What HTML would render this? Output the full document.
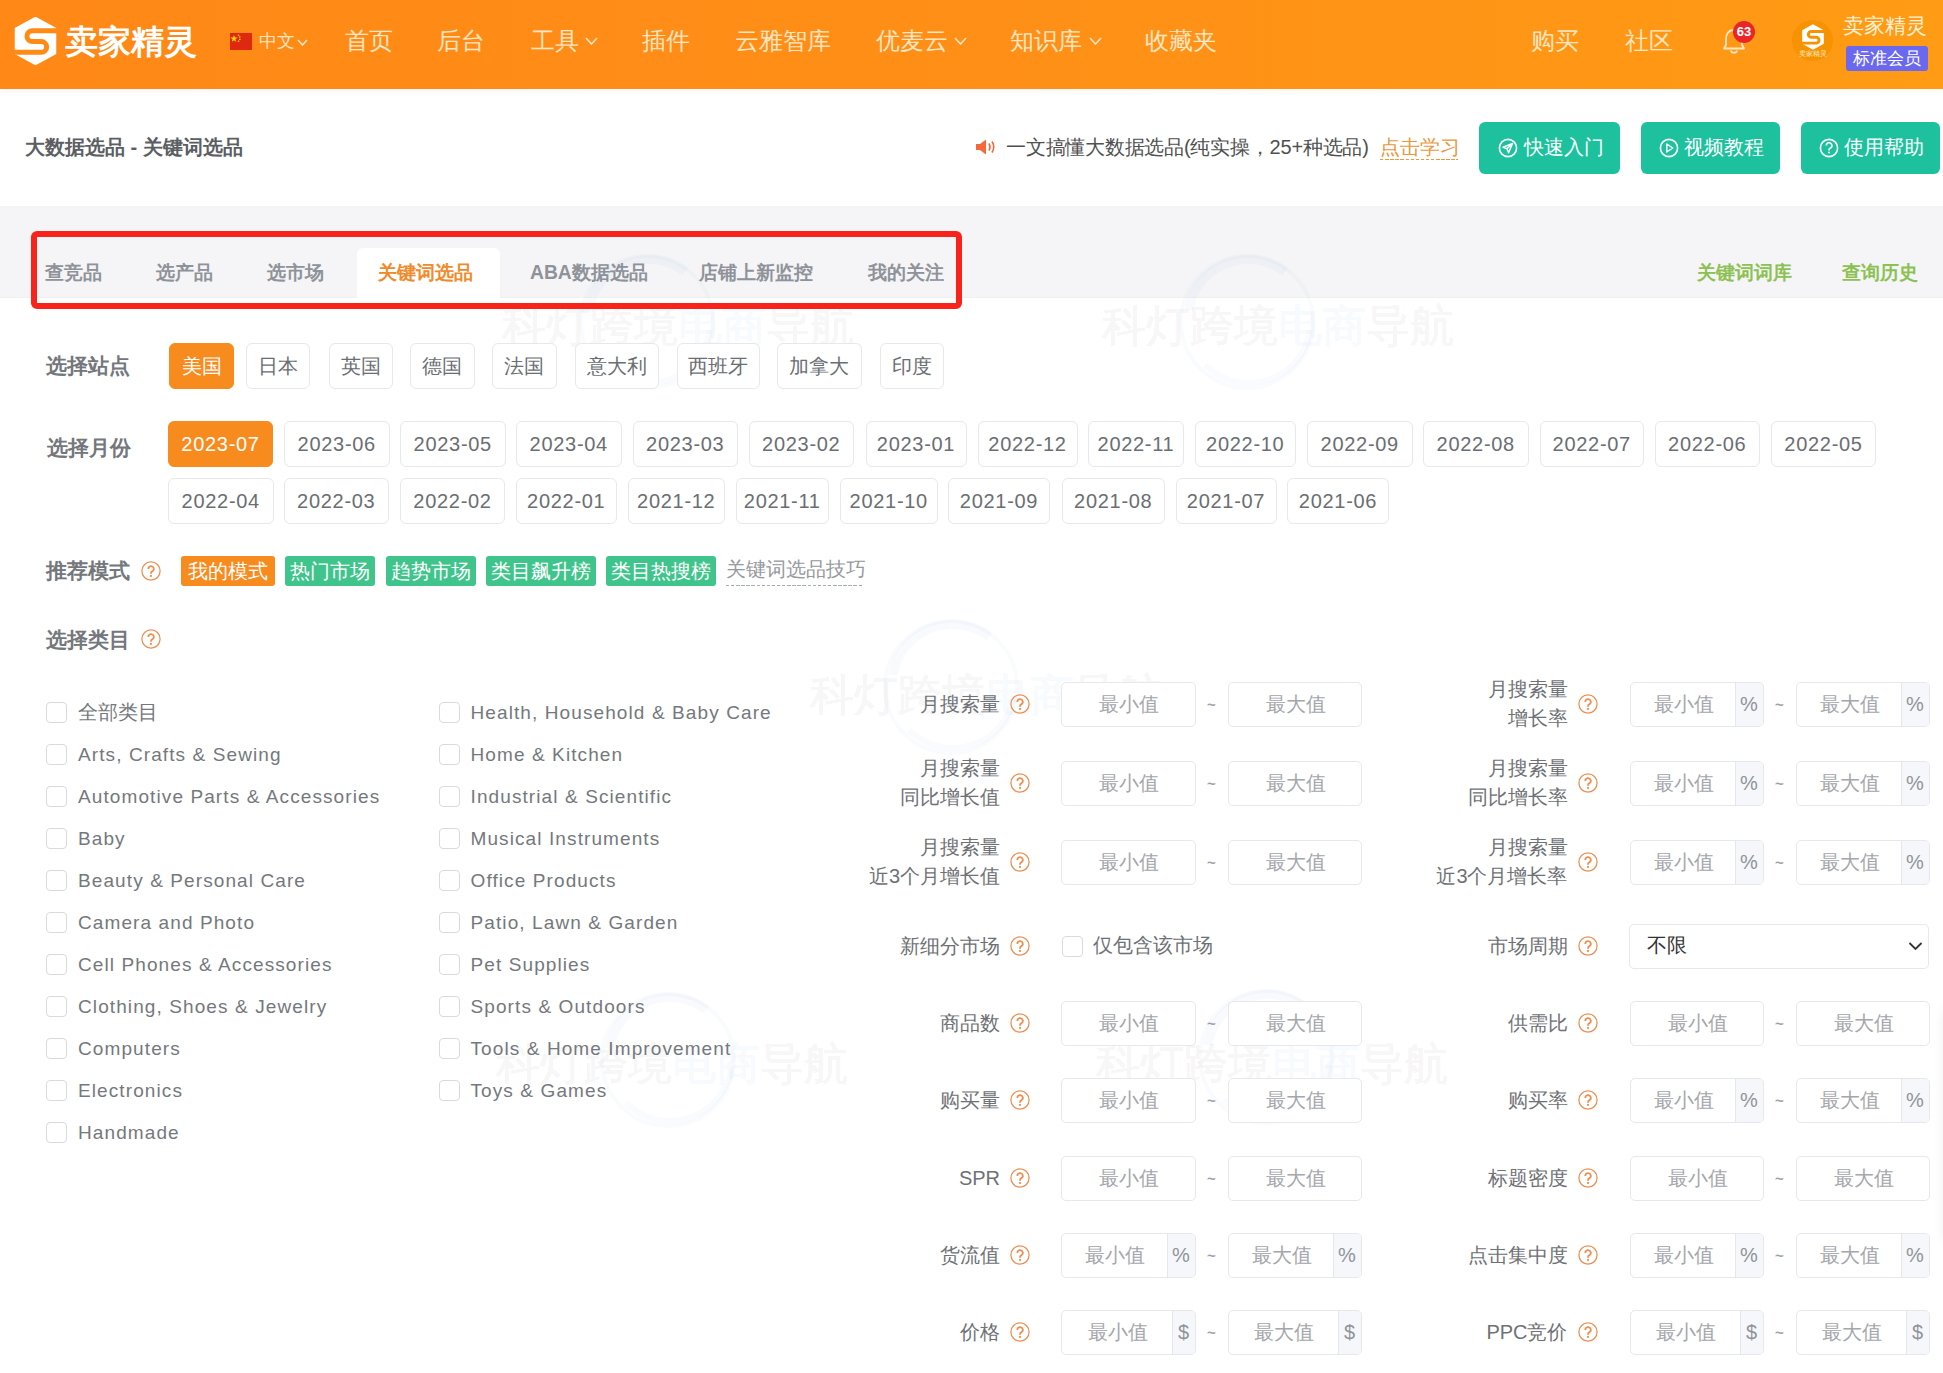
<!DOCTYPE html><html><head><meta charset="utf-8"><title>卖家精灵</title><style>
*{margin:0;padding:0;box-sizing:border-box}
html,body{width:1943px;height:1373px;overflow:hidden;background:#fff;position:relative;font-family:'Liberation Sans',sans-serif}
.t{position:absolute;white-space:nowrap}
.b{position:absolute}
.cb{position:absolute;width:21px;height:21px;border:1px solid #D9DADD;border-radius:4px;background:#fff}
.btn{position:absolute;border:1px solid #E6E8EC;border-radius:6px;background:#fff;color:#6B6E73;font:20px/1 'Liberation Sans',sans-serif;display:flex;align-items:center;justify-content:center}
.inp{position:absolute;border:1px solid #E6E8EC;border-radius:5px;background:#fff;overflow:hidden}
.ph{position:absolute;top:0;bottom:0;display:flex;align-items:center;justify-content:center;color:#A4A6AB;font:20px/1 'Liberation Sans',sans-serif}
.sfx{position:absolute;top:0;bottom:0;right:0;background:#F5F7FA;border-left:1px solid #E4E7ED;display:flex;align-items:center;justify-content:center;color:#909399;font:20px/1 'Liberation Sans',sans-serif}
.q{position:absolute;width:20px;height:20px}
.wm{position:absolute;white-space:nowrap;font:bold 44px/44px 'Liberation Sans',sans-serif;color:rgba(0,0,0,0.04);pointer-events:none}
</style></head><body>
<div class="b" style="left:0px;top:0px;width:1943px;height:89px;background:linear-gradient(90deg,#FF8816 0%,#FF8F17 50%,#FF9B14 100%);box-shadow:0 2px 6px rgba(0,0,0,0.045)"></div>
<svg class="b" style="left:14px;top:17px" width="43" height="48" viewBox="0 0 43 48">
<polygon points="21.5,0.5 41.5,11.5 41.5,36.5 21.5,47.5 1.5,36.5 1.5,11.5" fill="#fff" stroke="#fff" stroke-width="1.5" stroke-linejoin="round"/>
<path d="M45 13.8 H18.4 A5.4 5.4 0 0 0 18.4 24.6 H27.3 A5.35 5.35 0 0 1 27.3 35.3 H-2" fill="none" stroke="#FF8A16" stroke-width="5"/>
</svg>
<div class="t" style="left:65px;top:25px;font:bold 33px/33px 'Liberation Sans',sans-serif;color:#fff;font-weight:900">卖家精灵</div>
<svg class="b" style="left:230px;top:33px" width="22" height="17" viewBox="0 0 22 17">
<rect width="22" height="17" fill="#DE2910"/><polygon points="4,2 4.9,4.6 7.6,4.6 5.4,6.2 6.2,8.8 4,7.2 1.8,8.8 2.6,6.2 0.4,4.6 3.1,4.6" fill="#FFDE00"/>
<circle cx="8.5" cy="2.2" r="0.8" fill="#FFDE00"/><circle cx="9.8" cy="4" r="0.8" fill="#FFDE00"/><circle cx="9.8" cy="6.4" r="0.8" fill="#FFDE00"/><circle cx="8.5" cy="8.2" r="0.8" fill="#FFDE00"/>
</svg>
<div class="t" style="left:259px;top:32px;font:normal 18px/18px 'Liberation Sans',sans-serif;color:#FFE6C2;">中文</div>
<svg class="b" style="left:297px;top:39px" width="11" height="7" viewBox="0 0 11 7"><polyline points="1,1 5.5,6 10,1" fill="none" stroke="#FFE6C2" stroke-width="1.6"/></svg>
<div class="t" style="left:345px;top:29px;font:normal 24px/24px 'Liberation Sans',sans-serif;color:#FFE6C2;">首页</div>
<div class="t" style="left:437px;top:29px;font:normal 24px/24px 'Liberation Sans',sans-serif;color:#FFE6C2;">后台</div>
<div class="t" style="left:531px;top:29px;font:normal 24px/24px 'Liberation Sans',sans-serif;color:#FFE6C2;">工具</div>
<div class="t" style="left:642px;top:29px;font:normal 24px/24px 'Liberation Sans',sans-serif;color:#FFE6C2;">插件</div>
<div class="t" style="left:735px;top:29px;font:normal 24px/24px 'Liberation Sans',sans-serif;color:#FFE6C2;">云雅智库</div>
<div class="t" style="left:876px;top:29px;font:normal 24px/24px 'Liberation Sans',sans-serif;color:#FFE6C2;">优麦云</div>
<div class="t" style="left:1010px;top:29px;font:normal 24px/24px 'Liberation Sans',sans-serif;color:#FFE6C2;">知识库</div>
<div class="t" style="left:1145px;top:29px;font:normal 24px/24px 'Liberation Sans',sans-serif;color:#FFE6C2;">收藏夹</div>
<div class="t" style="left:1531px;top:29px;font:normal 24px/24px 'Liberation Sans',sans-serif;color:#FFE6C2;">购买</div>
<div class="t" style="left:1625px;top:29px;font:normal 24px/24px 'Liberation Sans',sans-serif;color:#FFE6C2;">社区</div>
<svg class="b" style="left:585px;top:37px" width="13" height="8" viewBox="0 0 13 8"><polyline points="1,1 6.5,7 12,1" fill="none" stroke="#FFE6C2" stroke-width="1.6"/></svg>
<svg class="b" style="left:954px;top:37px" width="13" height="8" viewBox="0 0 13 8"><polyline points="1,1 6.5,7 12,1" fill="none" stroke="#FFE6C2" stroke-width="1.6"/></svg>
<svg class="b" style="left:1089px;top:37px" width="13" height="8" viewBox="0 0 13 8"><polyline points="1,1 6.5,7 12,1" fill="none" stroke="#FFE6C2" stroke-width="1.6"/></svg>
<svg class="b" style="left:1722px;top:27px" width="24" height="27" viewBox="0 0 24 27">
<path d="M12 3 C6.5 3 4 7 4 12 V18 L2 21.5 H22 L20 18 V12 C20 7 17.5 3 12 3 Z" fill="none" stroke="#FFE6C2" stroke-width="1.8" stroke-linejoin="round"/>
<path d="M9 23.5 a3 2.2 0 0 0 6 0" fill="none" stroke="#FFE6C2" stroke-width="1.8"/>
</svg>
<div class="b" style="left:1733px;top:21px;width:22px;height:22px;border-radius:50%;background:#E8262A;color:#fff;font:bold 13px/22px 'Liberation Sans',sans-serif;text-align:center">63</div>
<div class="b" style="left:1792px;top:20px;width:41px;height:41px;border-radius:50%;background:#F79300"></div>
<svg class="b" style="left:1801px;top:24px" width="24" height="26" viewBox="0 0 43 48">
<polygon points="21.5,0.5 41.5,11.5 41.5,36.5 21.5,47.5 1.5,36.5 1.5,11.5" fill="#fff"/>
<path d="M45 13.8 H18.4 A5.4 5.4 0 0 0 18.4 24.6 H27.3 A5.35 5.35 0 0 1 27.3 35.3 H-2" fill="none" stroke="#F79300" stroke-width="5.5"/>
</svg>
<div class="t" style="left:1799px;top:50px;font:normal 7px/8px 'Liberation Sans',sans-serif;color:#FFE9C8;">卖家精灵</div>
<div class="t" style="left:1843px;top:15px;font:normal 21px/21px 'Liberation Sans',sans-serif;color:#FFF1D6;">卖家精灵</div>
<div class="b" style="left:1846px;top:46px;width:82px;height:25px;border-radius:3px;background:#6B68F0;color:#fff;font:17px/25px 'Liberation Sans',sans-serif;text-align:center">标准会员</div>
<div class="t" style="left:25px;top:137px;font:bold 20px/20px 'Liberation Sans',sans-serif;color:#5B5E63;">大数据选品 - 关键词选品</div>
<svg class="b" style="left:975px;top:138px" width="22" height="18" viewBox="0 0 22 18">
<path d="M1 6 H5 L11 1.5 V16.5 L5 12 H1 Z" fill="#F4683A"/>
<path d="M14 5.5 Q16 9 14 12.5" fill="none" stroke="#F4683A" stroke-width="1.6"/>
<path d="M17 3.5 Q20.5 9 17 14.5" fill="none" stroke="#F4683A" stroke-width="1.6"/>
</svg>
<div class="t" style="left:1006px;top:137px;font:normal 20px/20px 'Liberation Sans',sans-serif;color:#505050;letter-spacing:-0.22px">一文搞懂大数据选品(纯实操，25+种选品)</div>
<div class="t" style="left:1380px;top:137.5px;font:normal 19.5px/19.5px 'Liberation Sans',sans-serif;color:#E9983C;">点击学习</div>
<div class="b" style="left:1380px;top:158.5px;width:78px;height:1.5px;background:repeating-linear-gradient(90deg,#E9983C 0 3.4px,transparent 3.4px 5.1px)"></div>
<div class="b" style="left:1479px;top:122px;width:141px;height:52px;border-radius:6px;background:#1DC19E"></div>
<svg class="b" style="left:1498px;top:138px" width="20" height="20" viewBox="0 0 20 20"><circle cx="10" cy="10" r="8.6" fill="none" stroke="#fff" stroke-width="1.6"/><path d="M14.5 5.5 L5 9.3 L9 10.8 L10.6 14.8 Z M9 10.8 L14.5 5.5" fill="none" stroke="#fff" stroke-width="1.5" stroke-linejoin="round"/></svg>
<div class="t" style="left:1524px;top:138px;font:normal 19.5px/19.5px 'Liberation Sans',sans-serif;color:#fff;">快速入门</div>
<div class="b" style="left:1641px;top:122px;width:139px;height:52px;border-radius:6px;background:#1DC19E"></div>
<svg class="b" style="left:1658.5px;top:138px" width="20" height="20" viewBox="0 0 20 20"><circle cx="10" cy="10" r="8.6" fill="none" stroke="#fff" stroke-width="1.6"/><path d="M7.8 6 L13.8 10 L7.8 14 Z" fill="none" stroke="#fff" stroke-width="1.5" stroke-linejoin="round"/></svg>
<div class="t" style="left:1684px;top:138px;font:normal 19.5px/19.5px 'Liberation Sans',sans-serif;color:#fff;">视频教程</div>
<div class="b" style="left:1801px;top:122px;width:139px;height:52px;border-radius:6px;background:#1DC19E"></div>
<svg class="b" style="left:1818.5px;top:138px" width="20" height="20" viewBox="0 0 20 20"><circle cx="10" cy="10" r="8.6" fill="none" stroke="#fff" stroke-width="1.6"/><path d="M7.3 7.6 a2.8 2.8 0 1 1 3.8 2.6 c-0.8 0.4 -1.1 0.9 -1.1 1.8 v0.6" fill="none" stroke="#fff" stroke-width="1.6"/><circle cx="10" cy="14.6" r="1" fill="#fff"/></svg>
<div class="t" style="left:1844px;top:138px;font:normal 19.5px/19.5px 'Liberation Sans',sans-serif;color:#fff;">使用帮助</div>
<div class="b" style="left:0px;top:206px;width:1943px;height:92px;background:#F5F5F7;border-bottom:1px solid #EEEFF1"></div>
<div class="b" style="left:357px;top:248px;width:143px;height:51px;background:#fff;border-radius:6px 6px 0 0"></div>
<div class="t" style="left:45px;top:263px;font:bold 19.3px/19.3px 'Liberation Sans',sans-serif;color:#8F9399;font-weight:900">查竞品</div>
<div class="t" style="left:156px;top:263px;font:bold 19.3px/19.3px 'Liberation Sans',sans-serif;color:#8F9399;font-weight:900">选产品</div>
<div class="t" style="left:267px;top:263px;font:bold 19.3px/19.3px 'Liberation Sans',sans-serif;color:#8F9399;font-weight:900">选市场</div>
<div class="t" style="left:530px;top:263px;font:bold 19.3px/19.3px 'Liberation Sans',sans-serif;color:#8F9399;font-weight:900">ABA数据选品</div>
<div class="t" style="left:699px;top:263px;font:bold 19.3px/19.3px 'Liberation Sans',sans-serif;color:#8F9399;font-weight:900">店铺上新监控</div>
<div class="t" style="left:868px;top:263px;font:bold 19.3px/19.3px 'Liberation Sans',sans-serif;color:#8F9399;font-weight:900">我的关注</div>
<div class="t" style="left:378px;top:263px;font:bold 19.3px/19.3px 'Liberation Sans',sans-serif;color:#F08A2B;font-weight:900">关键词选品</div>
<div class="t" style="left:1697px;top:263px;font:bold 19.3px/19.3px 'Liberation Sans',sans-serif;color:#8DC153;">关键词词库</div>
<div class="t" style="left:1842px;top:263px;font:bold 19.3px/19.3px 'Liberation Sans',sans-serif;color:#8DC153;">查询历史</div>
<svg class="b" style="left:575px;top:250px" width="144" height="144" viewBox="0 0 144 144"><circle cx="72" cy="72" r="66" fill="none" stroke="rgba(90,150,215,0.04)" stroke-width="4"/><path d="M14 60 A60 60 0 0 1 110 22" fill="none" stroke="rgba(90,150,215,0.045)" stroke-width="9"/><path d="M30 115 A62 62 0 0 0 135 80" fill="none" stroke="rgba(90,150,215,0.035)" stroke-width="6"/></svg>
<div class="wm" style="left:502px;top:304px">科灯跨境<span style="color:rgba(60,140,220,0.05)">电商</span>导航</div>
<svg class="b" style="left:1175px;top:250px" width="144" height="144" viewBox="0 0 144 144"><circle cx="72" cy="72" r="66" fill="none" stroke="rgba(90,150,215,0.04)" stroke-width="4"/><path d="M14 60 A60 60 0 0 1 110 22" fill="none" stroke="rgba(90,150,215,0.045)" stroke-width="9"/><path d="M30 115 A62 62 0 0 0 135 80" fill="none" stroke="rgba(90,150,215,0.035)" stroke-width="6"/></svg>
<div class="wm" style="left:1102px;top:304px">科灯跨境<span style="color:rgba(60,140,220,0.05)">电商</span>导航</div>
<svg class="b" style="left:879px;top:615px" width="144" height="144" viewBox="0 0 144 144"><circle cx="72" cy="72" r="66" fill="none" stroke="rgba(90,150,215,0.04)" stroke-width="4"/><path d="M14 60 A60 60 0 0 1 110 22" fill="none" stroke="rgba(90,150,215,0.045)" stroke-width="9"/><path d="M30 115 A62 62 0 0 0 135 80" fill="none" stroke="rgba(90,150,215,0.035)" stroke-width="6"/></svg>
<div class="wm" style="left:810px;top:673px">科灯跨境<span style="color:rgba(60,140,220,0.05)">电商</span>导航</div>
<svg class="b" style="left:596px;top:988px" width="144" height="144" viewBox="0 0 144 144"><circle cx="72" cy="72" r="66" fill="none" stroke="rgba(90,150,215,0.04)" stroke-width="4"/><path d="M14 60 A60 60 0 0 1 110 22" fill="none" stroke="rgba(90,150,215,0.045)" stroke-width="9"/><path d="M30 115 A62 62 0 0 0 135 80" fill="none" stroke="rgba(90,150,215,0.035)" stroke-width="6"/></svg>
<div class="wm" style="left:496px;top:1042px">科灯跨境<span style="color:rgba(60,140,220,0.05)">电商</span>导航</div>
<svg class="b" style="left:1194px;top:985px" width="144" height="144" viewBox="0 0 144 144"><circle cx="72" cy="72" r="66" fill="none" stroke="rgba(90,150,215,0.04)" stroke-width="4"/><path d="M14 60 A60 60 0 0 1 110 22" fill="none" stroke="rgba(90,150,215,0.045)" stroke-width="9"/><path d="M30 115 A62 62 0 0 0 135 80" fill="none" stroke="rgba(90,150,215,0.035)" stroke-width="6"/></svg>
<div class="wm" style="left:1096px;top:1042px">科灯跨境<span style="color:rgba(60,140,220,0.05)">电商</span>导航</div>
<div class="b" style="left:31px;top:231px;width:931px;height:78px;border:6px solid #F8231A;border-radius:6px"></div>
<div class="t" style="left:46px;top:355px;font:bold 21px/21px 'Liberation Sans',sans-serif;color:#74777C;font-weight:900">选择站点</div>
<div class="btn" style="left:169px;top:343px;width:65px;height:46px;background:#F78B1E;border-color:#F78B1E;color:#fff;font-size:20px;">美国</div>
<div class="btn" style="left:246px;top:343px;width:64px;height:46px;font-size:20px;">日本</div>
<div class="btn" style="left:328.5px;top:343px;width:64.0px;height:46px;font-size:20px;">英国</div>
<div class="btn" style="left:410px;top:343px;width:64.5px;height:46px;font-size:20px;">德国</div>
<div class="btn" style="left:492px;top:343px;width:64.5px;height:46px;font-size:20px;">法国</div>
<div class="btn" style="left:574.5px;top:343px;width:84.0px;height:46px;font-size:20px;">意大利</div>
<div class="btn" style="left:676.5px;top:343px;width:83.0px;height:46px;font-size:20px;">西班牙</div>
<div class="btn" style="left:777px;top:343px;width:84.5px;height:46px;font-size:20px;">加拿大</div>
<div class="btn" style="left:879.5px;top:343px;width:64.0px;height:46px;font-size:20px;">印度</div>
<div class="t" style="left:47px;top:437px;font:bold 21px/21px 'Liberation Sans',sans-serif;color:#74777C;font-weight:900">选择月份</div>
<div class="btn" style="left:168px;top:421px;width:105px;height:46px;background:#F78B1E;border-color:#F78B1E;color:#fff;font-size:20px;letter-spacing:0.7px;">2023-07</div>
<div class="btn" style="left:284px;top:421px;width:105.5px;height:46px;font-size:20px;letter-spacing:0.7px;">2023-06</div>
<div class="btn" style="left:400px;top:421px;width:105.5px;height:46px;font-size:20px;letter-spacing:0.7px;">2023-05</div>
<div class="btn" style="left:516px;top:421px;width:105.5px;height:46px;font-size:20px;letter-spacing:0.7px;">2023-04</div>
<div class="btn" style="left:633px;top:421px;width:104.5px;height:46px;font-size:20px;letter-spacing:0.7px;">2023-03</div>
<div class="btn" style="left:749px;top:421px;width:104.5px;height:46px;font-size:20px;letter-spacing:0.7px;">2023-02</div>
<div class="btn" style="left:865.5px;top:421px;width:101.0px;height:46px;font-size:20px;letter-spacing:0.7px;">2023-01</div>
<div class="btn" style="left:977.5px;top:421px;width:100.0px;height:46px;font-size:20px;letter-spacing:0.7px;">2022-12</div>
<div class="btn" style="left:1088px;top:421px;width:96px;height:46px;font-size:20px;letter-spacing:0.7px;">2022-11</div>
<div class="btn" style="left:1195px;top:421px;width:100.5px;height:46px;font-size:20px;letter-spacing:0.7px;">2022-10</div>
<div class="btn" style="left:1307px;top:421px;width:105.5px;height:46px;font-size:20px;letter-spacing:0.7px;">2022-09</div>
<div class="btn" style="left:1423px;top:421px;width:105.5px;height:46px;font-size:20px;letter-spacing:0.7px;">2022-08</div>
<div class="btn" style="left:1540px;top:421px;width:103.5px;height:46px;font-size:20px;letter-spacing:0.7px;">2022-07</div>
<div class="btn" style="left:1655px;top:421px;width:104.5px;height:46px;font-size:20px;letter-spacing:0.7px;">2022-06</div>
<div class="btn" style="left:1771px;top:421px;width:105px;height:46px;font-size:20px;letter-spacing:0.7px;">2022-05</div>
<div class="btn" style="left:168px;top:477.5px;width:105.5px;height:46.0px;font-size:20px;letter-spacing:0.7px;">2022-04</div>
<div class="btn" style="left:284px;top:477.5px;width:104.5px;height:46.0px;font-size:20px;letter-spacing:0.7px;">2022-03</div>
<div class="btn" style="left:400px;top:477.5px;width:105px;height:46.0px;font-size:20px;letter-spacing:0.7px;">2022-02</div>
<div class="btn" style="left:515.5px;top:477.5px;width:101.5px;height:46.0px;font-size:20px;letter-spacing:0.7px;">2022-01</div>
<div class="btn" style="left:628px;top:477.5px;width:96.5px;height:46.0px;font-size:20px;letter-spacing:0.7px;">2021-12</div>
<div class="btn" style="left:736px;top:477.5px;width:92.5px;height:46.0px;font-size:20px;letter-spacing:0.7px;">2021-11</div>
<div class="btn" style="left:840px;top:477.5px;width:97.5px;height:46.0px;font-size:20px;letter-spacing:0.7px;">2021-10</div>
<div class="btn" style="left:948px;top:477.5px;width:102px;height:46.0px;font-size:20px;letter-spacing:0.7px;">2021-09</div>
<div class="btn" style="left:1062px;top:477.5px;width:102.5px;height:46.0px;font-size:20px;letter-spacing:0.7px;">2021-08</div>
<div class="btn" style="left:1175.5px;top:477.5px;width:101.0px;height:46.0px;font-size:20px;letter-spacing:0.7px;">2021-07</div>
<div class="btn" style="left:1287px;top:477.5px;width:102px;height:46.0px;font-size:20px;letter-spacing:0.7px;">2021-06</div>
<div class="t" style="left:46px;top:560px;font:bold 21px/21px 'Liberation Sans',sans-serif;color:#74777C;font-weight:900">推荐模式</div>
<svg class="q" style="left:140.5px;top:560.5px;width:20px;height:20px" viewBox="0 0 20 20"><circle cx="10" cy="10" r="9.1" fill="none" stroke="#EC8F52" stroke-width="1.25"/><path d="M7.3 7.9 a2.75 2.75 0 1 1 3.9 2.5 c-0.8 0.4 -1.15 0.9 -1.15 1.8 v0.5" fill="none" stroke="#EC8F52" stroke-width="1.8"/><circle cx="10" cy="14.9" r="1.1" fill="#EC8F52"/></svg>
<div class="b" style="left:181px;top:556px;width:94px;height:30px;border-radius:3px;background:#F78B1E;color:#fff;font:19.5px/30px 'Liberation Sans',sans-serif;text-align:center">我的模式</div>
<div class="b" style="left:284.5px;top:556px;width:90.5px;height:30px;border-radius:3px;background:#3FC48B;color:#fff;font:19.5px/30px 'Liberation Sans',sans-serif;text-align:center">热门市场</div>
<div class="b" style="left:386px;top:556px;width:90px;height:30px;border-radius:3px;background:#3FC48B;color:#fff;font:19.5px/30px 'Liberation Sans',sans-serif;text-align:center">趋势市场</div>
<div class="b" style="left:486px;top:556px;width:110px;height:30px;border-radius:3px;background:#3FC48B;color:#fff;font:19.5px/30px 'Liberation Sans',sans-serif;text-align:center">类目飙升榜</div>
<div class="b" style="left:606px;top:556px;width:110px;height:30px;border-radius:3px;background:#3FC48B;color:#fff;font:19.5px/30px 'Liberation Sans',sans-serif;text-align:center">类目热搜榜</div>
<div class="t" style="left:726px;top:559.5px;font:normal 19.8px/19.8px 'Liberation Sans',sans-serif;color:#96999E;">关键词选品技巧</div>
<div class="b" style="left:725.5px;top:585px;width:137.5px;height:1.2999999999999545px;background:repeating-linear-gradient(90deg,#A9ACB0 0 3.4px,transparent 3.4px 5.1px)"></div>
<div class="t" style="left:46px;top:629px;font:bold 21px/21px 'Liberation Sans',sans-serif;color:#74777C;font-weight:900">选择类目</div>
<svg class="q" style="left:140.5px;top:629px;width:20px;height:20px" viewBox="0 0 20 20"><circle cx="10" cy="10" r="9.1" fill="none" stroke="#EC8F52" stroke-width="1.25"/><path d="M7.3 7.9 a2.75 2.75 0 1 1 3.9 2.5 c-0.8 0.4 -1.15 0.9 -1.15 1.8 v0.5" fill="none" stroke="#EC8F52" stroke-width="1.8"/><circle cx="10" cy="14.9" r="1.1" fill="#EC8F52"/></svg>
<div class="cb" style="left:46px;top:702.0px"></div>
<div class="t" style="left:78px;top:703.0px;font:normal 19.5px/19.5px 'Liberation Sans',sans-serif;color:#75787D;">全部类目</div>
<div class="cb" style="left:46px;top:744.0px"></div>
<div class="t" style="left:78px;top:743.5px;font:19px/22px 'Liberation Sans',sans-serif;color:#75787D;letter-spacing:1.1px">Arts, Crafts &amp; Sewing</div>
<div class="cb" style="left:46px;top:786.0px"></div>
<div class="t" style="left:78px;top:785.5px;font:19px/22px 'Liberation Sans',sans-serif;color:#75787D;letter-spacing:1.1px">Automotive Parts &amp; Accessories</div>
<div class="cb" style="left:46px;top:828.0px"></div>
<div class="t" style="left:78px;top:827.5px;font:19px/22px 'Liberation Sans',sans-serif;color:#75787D;letter-spacing:1.1px">Baby</div>
<div class="cb" style="left:46px;top:870.0px"></div>
<div class="t" style="left:78px;top:869.5px;font:19px/22px 'Liberation Sans',sans-serif;color:#75787D;letter-spacing:1.1px">Beauty &amp; Personal Care</div>
<div class="cb" style="left:46px;top:912.0px"></div>
<div class="t" style="left:78px;top:911.5px;font:19px/22px 'Liberation Sans',sans-serif;color:#75787D;letter-spacing:1.1px">Camera and Photo</div>
<div class="cb" style="left:46px;top:954.0px"></div>
<div class="t" style="left:78px;top:953.5px;font:19px/22px 'Liberation Sans',sans-serif;color:#75787D;letter-spacing:1.1px">Cell Phones &amp; Accessories</div>
<div class="cb" style="left:46px;top:996.0px"></div>
<div class="t" style="left:78px;top:995.5px;font:19px/22px 'Liberation Sans',sans-serif;color:#75787D;letter-spacing:1.1px">Clothing, Shoes &amp; Jewelry</div>
<div class="cb" style="left:46px;top:1038.0px"></div>
<div class="t" style="left:78px;top:1037.5px;font:19px/22px 'Liberation Sans',sans-serif;color:#75787D;letter-spacing:1.1px">Computers</div>
<div class="cb" style="left:46px;top:1080.0px"></div>
<div class="t" style="left:78px;top:1079.5px;font:19px/22px 'Liberation Sans',sans-serif;color:#75787D;letter-spacing:1.1px">Electronics</div>
<div class="cb" style="left:46px;top:1122.0px"></div>
<div class="t" style="left:78px;top:1121.5px;font:19px/22px 'Liberation Sans',sans-serif;color:#75787D;letter-spacing:1.1px">Handmade</div>
<div class="cb" style="left:439px;top:702.0px"></div>
<div class="t" style="left:470.5px;top:701.5px;font:19px/22px 'Liberation Sans',sans-serif;color:#75787D;letter-spacing:1.1px">Health, Household &amp; Baby Care</div>
<div class="cb" style="left:439px;top:744.0px"></div>
<div class="t" style="left:470.5px;top:743.5px;font:19px/22px 'Liberation Sans',sans-serif;color:#75787D;letter-spacing:1.1px">Home &amp; Kitchen</div>
<div class="cb" style="left:439px;top:786.0px"></div>
<div class="t" style="left:470.5px;top:785.5px;font:19px/22px 'Liberation Sans',sans-serif;color:#75787D;letter-spacing:1.1px">Industrial &amp; Scientific</div>
<div class="cb" style="left:439px;top:828.0px"></div>
<div class="t" style="left:470.5px;top:827.5px;font:19px/22px 'Liberation Sans',sans-serif;color:#75787D;letter-spacing:1.1px">Musical Instruments</div>
<div class="cb" style="left:439px;top:870.0px"></div>
<div class="t" style="left:470.5px;top:869.5px;font:19px/22px 'Liberation Sans',sans-serif;color:#75787D;letter-spacing:1.1px">Office Products</div>
<div class="cb" style="left:439px;top:912.0px"></div>
<div class="t" style="left:470.5px;top:911.5px;font:19px/22px 'Liberation Sans',sans-serif;color:#75787D;letter-spacing:1.1px">Patio, Lawn &amp; Garden</div>
<div class="cb" style="left:439px;top:954.0px"></div>
<div class="t" style="left:470.5px;top:953.5px;font:19px/22px 'Liberation Sans',sans-serif;color:#75787D;letter-spacing:1.1px">Pet Supplies</div>
<div class="cb" style="left:439px;top:996.0px"></div>
<div class="t" style="left:470.5px;top:995.5px;font:19px/22px 'Liberation Sans',sans-serif;color:#75787D;letter-spacing:1.1px">Sports &amp; Outdoors</div>
<div class="cb" style="left:439px;top:1038.0px"></div>
<div class="t" style="left:470.5px;top:1037.5px;font:19px/22px 'Liberation Sans',sans-serif;color:#75787D;letter-spacing:1.1px">Tools &amp; Home Improvement</div>
<div class="cb" style="left:439px;top:1080.0px"></div>
<div class="t" style="left:470.5px;top:1079.5px;font:19px/22px 'Liberation Sans',sans-serif;color:#75787D;letter-spacing:1.1px">Toys &amp; Games</div>
<div class="t" style="right:943px;top:689.5px;font:20px/29px 'Liberation Sans',sans-serif;color:#6F7176;text-align:right">月搜索量</div>
<svg class="q" style="left:1010px;top:694px;width:20px;height:20px" viewBox="0 0 20 20"><circle cx="10" cy="10" r="9.1" fill="none" stroke="#EC8F52" stroke-width="1.25"/><path d="M7.3 7.9 a2.75 2.75 0 1 1 3.9 2.5 c-0.8 0.4 -1.15 0.9 -1.15 1.8 v0.5" fill="none" stroke="#EC8F52" stroke-width="1.8"/><circle cx="10" cy="14.9" r="1.1" fill="#EC8F52"/></svg>
<div class="t" style="right:375.5px;top:675.0px;font:20px/29px 'Liberation Sans',sans-serif;color:#6F7176;text-align:right">月搜索量<br>增长率</div>
<svg class="q" style="left:1578px;top:694px;width:20px;height:20px" viewBox="0 0 20 20"><circle cx="10" cy="10" r="9.1" fill="none" stroke="#EC8F52" stroke-width="1.25"/><path d="M7.3 7.9 a2.75 2.75 0 1 1 3.9 2.5 c-0.8 0.4 -1.15 0.9 -1.15 1.8 v0.5" fill="none" stroke="#EC8F52" stroke-width="1.8"/><circle cx="10" cy="14.9" r="1.1" fill="#EC8F52"/></svg>
<div class="inp" style="left:1061px;top:681.5px;width:134.5px;height:45.0px"><div class="ph" style="left:0;width:134.5px">最小值</div></div>
<div class="inp" style="left:1227.5px;top:681.5px;width:134.0px;height:45.0px"><div class="ph" style="left:0;width:134.0px">最大值</div></div>
<div class="t" style="left:1207px;top:695px;font:bold 15px/20px 'Liberation Sans',sans-serif;color:#A0A3A8">~</div>
<div class="inp" style="left:1629.5px;top:681.5px;width:134.0px;height:45.0px"><div class="ph" style="left:0;width:106.0px">最小值</div><div class="sfx" style="width:28px">%</div></div>
<div class="inp" style="left:1795.5px;top:681.5px;width:134.0px;height:45.0px"><div class="ph" style="left:0;width:106.0px">最大值</div><div class="sfx" style="width:28px">%</div></div>
<div class="t" style="left:1775px;top:695px;font:bold 15px/20px 'Liberation Sans',sans-serif;color:#A0A3A8">~</div>
<div class="t" style="right:943px;top:754.0px;font:20px/29px 'Liberation Sans',sans-serif;color:#6F7176;text-align:right">月搜索量<br>同比增长值</div>
<svg class="q" style="left:1010px;top:773px;width:20px;height:20px" viewBox="0 0 20 20"><circle cx="10" cy="10" r="9.1" fill="none" stroke="#EC8F52" stroke-width="1.25"/><path d="M7.3 7.9 a2.75 2.75 0 1 1 3.9 2.5 c-0.8 0.4 -1.15 0.9 -1.15 1.8 v0.5" fill="none" stroke="#EC8F52" stroke-width="1.8"/><circle cx="10" cy="14.9" r="1.1" fill="#EC8F52"/></svg>
<div class="t" style="right:375.5px;top:754.0px;font:20px/29px 'Liberation Sans',sans-serif;color:#6F7176;text-align:right">月搜索量<br>同比增长率</div>
<svg class="q" style="left:1578px;top:773px;width:20px;height:20px" viewBox="0 0 20 20"><circle cx="10" cy="10" r="9.1" fill="none" stroke="#EC8F52" stroke-width="1.25"/><path d="M7.3 7.9 a2.75 2.75 0 1 1 3.9 2.5 c-0.8 0.4 -1.15 0.9 -1.15 1.8 v0.5" fill="none" stroke="#EC8F52" stroke-width="1.8"/><circle cx="10" cy="14.9" r="1.1" fill="#EC8F52"/></svg>
<div class="inp" style="left:1061px;top:760.5px;width:134.5px;height:45.0px"><div class="ph" style="left:0;width:134.5px">最小值</div></div>
<div class="inp" style="left:1227.5px;top:760.5px;width:134.0px;height:45.0px"><div class="ph" style="left:0;width:134.0px">最大值</div></div>
<div class="t" style="left:1207px;top:774px;font:bold 15px/20px 'Liberation Sans',sans-serif;color:#A0A3A8">~</div>
<div class="inp" style="left:1629.5px;top:760.5px;width:134.0px;height:45.0px"><div class="ph" style="left:0;width:106.0px">最小值</div><div class="sfx" style="width:28px">%</div></div>
<div class="inp" style="left:1795.5px;top:760.5px;width:134.0px;height:45.0px"><div class="ph" style="left:0;width:106.0px">最大值</div><div class="sfx" style="width:28px">%</div></div>
<div class="t" style="left:1775px;top:774px;font:bold 15px/20px 'Liberation Sans',sans-serif;color:#A0A3A8">~</div>
<div class="t" style="right:943px;top:833.0px;font:20px/29px 'Liberation Sans',sans-serif;color:#6F7176;text-align:right">月搜索量<br>近3个月增长值</div>
<svg class="q" style="left:1010px;top:852px;width:20px;height:20px" viewBox="0 0 20 20"><circle cx="10" cy="10" r="9.1" fill="none" stroke="#EC8F52" stroke-width="1.25"/><path d="M7.3 7.9 a2.75 2.75 0 1 1 3.9 2.5 c-0.8 0.4 -1.15 0.9 -1.15 1.8 v0.5" fill="none" stroke="#EC8F52" stroke-width="1.8"/><circle cx="10" cy="14.9" r="1.1" fill="#EC8F52"/></svg>
<div class="t" style="right:375.5px;top:833.0px;font:20px/29px 'Liberation Sans',sans-serif;color:#6F7176;text-align:right">月搜索量<br>近3个月增长率</div>
<svg class="q" style="left:1578px;top:852px;width:20px;height:20px" viewBox="0 0 20 20"><circle cx="10" cy="10" r="9.1" fill="none" stroke="#EC8F52" stroke-width="1.25"/><path d="M7.3 7.9 a2.75 2.75 0 1 1 3.9 2.5 c-0.8 0.4 -1.15 0.9 -1.15 1.8 v0.5" fill="none" stroke="#EC8F52" stroke-width="1.8"/><circle cx="10" cy="14.9" r="1.1" fill="#EC8F52"/></svg>
<div class="inp" style="left:1061px;top:839.5px;width:134.5px;height:45.0px"><div class="ph" style="left:0;width:134.5px">最小值</div></div>
<div class="inp" style="left:1227.5px;top:839.5px;width:134.0px;height:45.0px"><div class="ph" style="left:0;width:134.0px">最大值</div></div>
<div class="t" style="left:1207px;top:853px;font:bold 15px/20px 'Liberation Sans',sans-serif;color:#A0A3A8">~</div>
<div class="inp" style="left:1629.5px;top:839.5px;width:134.0px;height:45.0px"><div class="ph" style="left:0;width:106.0px">最小值</div><div class="sfx" style="width:28px">%</div></div>
<div class="inp" style="left:1795.5px;top:839.5px;width:134.0px;height:45.0px"><div class="ph" style="left:0;width:106.0px">最大值</div><div class="sfx" style="width:28px">%</div></div>
<div class="t" style="left:1775px;top:853px;font:bold 15px/20px 'Liberation Sans',sans-serif;color:#A0A3A8">~</div>
<div class="t" style="right:943px;top:931.5px;font:20px/29px 'Liberation Sans',sans-serif;color:#6F7176;text-align:right">新细分市场</div>
<svg class="q" style="left:1010px;top:936px;width:20px;height:20px" viewBox="0 0 20 20"><circle cx="10" cy="10" r="9.1" fill="none" stroke="#EC8F52" stroke-width="1.25"/><path d="M7.3 7.9 a2.75 2.75 0 1 1 3.9 2.5 c-0.8 0.4 -1.15 0.9 -1.15 1.8 v0.5" fill="none" stroke="#EC8F52" stroke-width="1.8"/><circle cx="10" cy="14.9" r="1.1" fill="#EC8F52"/></svg>
<div class="t" style="right:375.5px;top:931.5px;font:20px/29px 'Liberation Sans',sans-serif;color:#6F7176;text-align:right">市场周期</div>
<svg class="q" style="left:1578px;top:936px;width:20px;height:20px" viewBox="0 0 20 20"><circle cx="10" cy="10" r="9.1" fill="none" stroke="#EC8F52" stroke-width="1.25"/><path d="M7.3 7.9 a2.75 2.75 0 1 1 3.9 2.5 c-0.8 0.4 -1.15 0.9 -1.15 1.8 v0.5" fill="none" stroke="#EC8F52" stroke-width="1.8"/><circle cx="10" cy="14.9" r="1.1" fill="#EC8F52"/></svg>
<div class="cb" style="left:1061.5px;top:936px"></div>
<div class="t" style="left:1093px;top:936px;font:normal 19.5px/19.5px 'Liberation Sans',sans-serif;color:#6F7176;">仅包含该市场</div>
<div class="inp" style="left:1629px;top:923.5px;width:300px;height:45px"></div>
<div class="t" style="left:1647px;top:936px;font:normal 19.5px/19.5px 'Liberation Sans',sans-serif;color:#333;">不限</div>
<svg class="b" style="left:1908px;top:941px" width="15" height="10" viewBox="0 0 15 10"><polyline points="1.5,2 7.5,8 13.5,2" fill="none" stroke="#333" stroke-width="1.8"/></svg>
<div class="t" style="right:943px;top:1008.5px;font:20px/29px 'Liberation Sans',sans-serif;color:#6F7176;text-align:right">商品数</div>
<svg class="q" style="left:1010px;top:1013px;width:20px;height:20px" viewBox="0 0 20 20"><circle cx="10" cy="10" r="9.1" fill="none" stroke="#EC8F52" stroke-width="1.25"/><path d="M7.3 7.9 a2.75 2.75 0 1 1 3.9 2.5 c-0.8 0.4 -1.15 0.9 -1.15 1.8 v0.5" fill="none" stroke="#EC8F52" stroke-width="1.8"/><circle cx="10" cy="14.9" r="1.1" fill="#EC8F52"/></svg>
<div class="t" style="right:375.5px;top:1008.5px;font:20px/29px 'Liberation Sans',sans-serif;color:#6F7176;text-align:right">供需比</div>
<svg class="q" style="left:1578px;top:1013px;width:20px;height:20px" viewBox="0 0 20 20"><circle cx="10" cy="10" r="9.1" fill="none" stroke="#EC8F52" stroke-width="1.25"/><path d="M7.3 7.9 a2.75 2.75 0 1 1 3.9 2.5 c-0.8 0.4 -1.15 0.9 -1.15 1.8 v0.5" fill="none" stroke="#EC8F52" stroke-width="1.8"/><circle cx="10" cy="14.9" r="1.1" fill="#EC8F52"/></svg>
<div class="inp" style="left:1061px;top:1000.5px;width:134.5px;height:45.0px"><div class="ph" style="left:0;width:134.5px">最小值</div></div>
<div class="inp" style="left:1227.5px;top:1000.5px;width:134.0px;height:45.0px"><div class="ph" style="left:0;width:134.0px">最大值</div></div>
<div class="t" style="left:1207px;top:1014px;font:bold 15px/20px 'Liberation Sans',sans-serif;color:#A0A3A8">~</div>
<div class="inp" style="left:1629.5px;top:1000.5px;width:134.0px;height:45.0px"><div class="ph" style="left:0;width:134.0px">最小值</div></div>
<div class="inp" style="left:1795.5px;top:1000.5px;width:134.0px;height:45.0px"><div class="ph" style="left:0;width:134.0px">最大值</div></div>
<div class="t" style="left:1775px;top:1014px;font:bold 15px/20px 'Liberation Sans',sans-serif;color:#A0A3A8">~</div>
<div class="t" style="right:943px;top:1085.5px;font:20px/29px 'Liberation Sans',sans-serif;color:#6F7176;text-align:right">购买量</div>
<svg class="q" style="left:1010px;top:1090px;width:20px;height:20px" viewBox="0 0 20 20"><circle cx="10" cy="10" r="9.1" fill="none" stroke="#EC8F52" stroke-width="1.25"/><path d="M7.3 7.9 a2.75 2.75 0 1 1 3.9 2.5 c-0.8 0.4 -1.15 0.9 -1.15 1.8 v0.5" fill="none" stroke="#EC8F52" stroke-width="1.8"/><circle cx="10" cy="14.9" r="1.1" fill="#EC8F52"/></svg>
<div class="t" style="right:375.5px;top:1085.5px;font:20px/29px 'Liberation Sans',sans-serif;color:#6F7176;text-align:right">购买率</div>
<svg class="q" style="left:1578px;top:1090px;width:20px;height:20px" viewBox="0 0 20 20"><circle cx="10" cy="10" r="9.1" fill="none" stroke="#EC8F52" stroke-width="1.25"/><path d="M7.3 7.9 a2.75 2.75 0 1 1 3.9 2.5 c-0.8 0.4 -1.15 0.9 -1.15 1.8 v0.5" fill="none" stroke="#EC8F52" stroke-width="1.8"/><circle cx="10" cy="14.9" r="1.1" fill="#EC8F52"/></svg>
<div class="inp" style="left:1061px;top:1077.5px;width:134.5px;height:45.0px"><div class="ph" style="left:0;width:134.5px">最小值</div></div>
<div class="inp" style="left:1227.5px;top:1077.5px;width:134.0px;height:45.0px"><div class="ph" style="left:0;width:134.0px">最大值</div></div>
<div class="t" style="left:1207px;top:1091px;font:bold 15px/20px 'Liberation Sans',sans-serif;color:#A0A3A8">~</div>
<div class="inp" style="left:1629.5px;top:1077.5px;width:134.0px;height:45.0px"><div class="ph" style="left:0;width:106.0px">最小值</div><div class="sfx" style="width:28px">%</div></div>
<div class="inp" style="left:1795.5px;top:1077.5px;width:134.0px;height:45.0px"><div class="ph" style="left:0;width:106.0px">最大值</div><div class="sfx" style="width:28px">%</div></div>
<div class="t" style="left:1775px;top:1091px;font:bold 15px/20px 'Liberation Sans',sans-serif;color:#A0A3A8">~</div>
<div class="t" style="right:943px;top:1163.5px;font:20px/29px 'Liberation Sans',sans-serif;color:#6F7176;text-align:right">SPR</div>
<svg class="q" style="left:1010px;top:1168px;width:20px;height:20px" viewBox="0 0 20 20"><circle cx="10" cy="10" r="9.1" fill="none" stroke="#EC8F52" stroke-width="1.25"/><path d="M7.3 7.9 a2.75 2.75 0 1 1 3.9 2.5 c-0.8 0.4 -1.15 0.9 -1.15 1.8 v0.5" fill="none" stroke="#EC8F52" stroke-width="1.8"/><circle cx="10" cy="14.9" r="1.1" fill="#EC8F52"/></svg>
<div class="t" style="right:375.5px;top:1163.5px;font:20px/29px 'Liberation Sans',sans-serif;color:#6F7176;text-align:right">标题密度</div>
<svg class="q" style="left:1578px;top:1168px;width:20px;height:20px" viewBox="0 0 20 20"><circle cx="10" cy="10" r="9.1" fill="none" stroke="#EC8F52" stroke-width="1.25"/><path d="M7.3 7.9 a2.75 2.75 0 1 1 3.9 2.5 c-0.8 0.4 -1.15 0.9 -1.15 1.8 v0.5" fill="none" stroke="#EC8F52" stroke-width="1.8"/><circle cx="10" cy="14.9" r="1.1" fill="#EC8F52"/></svg>
<div class="inp" style="left:1061px;top:1155.5px;width:134.5px;height:45.0px"><div class="ph" style="left:0;width:134.5px">最小值</div></div>
<div class="inp" style="left:1227.5px;top:1155.5px;width:134.0px;height:45.0px"><div class="ph" style="left:0;width:134.0px">最大值</div></div>
<div class="t" style="left:1207px;top:1169px;font:bold 15px/20px 'Liberation Sans',sans-serif;color:#A0A3A8">~</div>
<div class="inp" style="left:1629.5px;top:1155.5px;width:134.0px;height:45.0px"><div class="ph" style="left:0;width:134.0px">最小值</div></div>
<div class="inp" style="left:1795.5px;top:1155.5px;width:134.0px;height:45.0px"><div class="ph" style="left:0;width:134.0px">最大值</div></div>
<div class="t" style="left:1775px;top:1169px;font:bold 15px/20px 'Liberation Sans',sans-serif;color:#A0A3A8">~</div>
<div class="t" style="right:943px;top:1240.5px;font:20px/29px 'Liberation Sans',sans-serif;color:#6F7176;text-align:right">货流值</div>
<svg class="q" style="left:1010px;top:1245px;width:20px;height:20px" viewBox="0 0 20 20"><circle cx="10" cy="10" r="9.1" fill="none" stroke="#EC8F52" stroke-width="1.25"/><path d="M7.3 7.9 a2.75 2.75 0 1 1 3.9 2.5 c-0.8 0.4 -1.15 0.9 -1.15 1.8 v0.5" fill="none" stroke="#EC8F52" stroke-width="1.8"/><circle cx="10" cy="14.9" r="1.1" fill="#EC8F52"/></svg>
<div class="t" style="right:375.5px;top:1240.5px;font:20px/29px 'Liberation Sans',sans-serif;color:#6F7176;text-align:right">点击集中度</div>
<svg class="q" style="left:1578px;top:1245px;width:20px;height:20px" viewBox="0 0 20 20"><circle cx="10" cy="10" r="9.1" fill="none" stroke="#EC8F52" stroke-width="1.25"/><path d="M7.3 7.9 a2.75 2.75 0 1 1 3.9 2.5 c-0.8 0.4 -1.15 0.9 -1.15 1.8 v0.5" fill="none" stroke="#EC8F52" stroke-width="1.8"/><circle cx="10" cy="14.9" r="1.1" fill="#EC8F52"/></svg>
<div class="inp" style="left:1061px;top:1232.5px;width:134.5px;height:45.0px"><div class="ph" style="left:0;width:106.5px">最小值</div><div class="sfx" style="width:28px">%</div></div>
<div class="inp" style="left:1227.5px;top:1232.5px;width:134.0px;height:45.0px"><div class="ph" style="left:0;width:106.0px">最大值</div><div class="sfx" style="width:28px">%</div></div>
<div class="t" style="left:1207px;top:1246px;font:bold 15px/20px 'Liberation Sans',sans-serif;color:#A0A3A8">~</div>
<div class="inp" style="left:1629.5px;top:1232.5px;width:134.0px;height:45.0px"><div class="ph" style="left:0;width:106.0px">最小值</div><div class="sfx" style="width:28px">%</div></div>
<div class="inp" style="left:1795.5px;top:1232.5px;width:134.0px;height:45.0px"><div class="ph" style="left:0;width:106.0px">最大值</div><div class="sfx" style="width:28px">%</div></div>
<div class="t" style="left:1775px;top:1246px;font:bold 15px/20px 'Liberation Sans',sans-serif;color:#A0A3A8">~</div>
<div class="t" style="right:943px;top:1317.5px;font:20px/29px 'Liberation Sans',sans-serif;color:#6F7176;text-align:right">价格</div>
<svg class="q" style="left:1010px;top:1322px;width:20px;height:20px" viewBox="0 0 20 20"><circle cx="10" cy="10" r="9.1" fill="none" stroke="#EC8F52" stroke-width="1.25"/><path d="M7.3 7.9 a2.75 2.75 0 1 1 3.9 2.5 c-0.8 0.4 -1.15 0.9 -1.15 1.8 v0.5" fill="none" stroke="#EC8F52" stroke-width="1.8"/><circle cx="10" cy="14.9" r="1.1" fill="#EC8F52"/></svg>
<div class="t" style="right:375.5px;top:1317.5px;font:20px/29px 'Liberation Sans',sans-serif;color:#6F7176;text-align:right">PPC竞价</div>
<svg class="q" style="left:1578px;top:1322px;width:20px;height:20px" viewBox="0 0 20 20"><circle cx="10" cy="10" r="9.1" fill="none" stroke="#EC8F52" stroke-width="1.25"/><path d="M7.3 7.9 a2.75 2.75 0 1 1 3.9 2.5 c-0.8 0.4 -1.15 0.9 -1.15 1.8 v0.5" fill="none" stroke="#EC8F52" stroke-width="1.8"/><circle cx="10" cy="14.9" r="1.1" fill="#EC8F52"/></svg>
<div class="inp" style="left:1061px;top:1309.5px;width:134.5px;height:45.0px"><div class="ph" style="left:0;width:111.5px">最小值</div><div class="sfx" style="width:23px">$</div></div>
<div class="inp" style="left:1227.5px;top:1309.5px;width:134.0px;height:45.0px"><div class="ph" style="left:0;width:111.0px">最大值</div><div class="sfx" style="width:23px">$</div></div>
<div class="t" style="left:1207px;top:1323px;font:bold 15px/20px 'Liberation Sans',sans-serif;color:#A0A3A8">~</div>
<div class="inp" style="left:1629.5px;top:1309.5px;width:134.0px;height:45.0px"><div class="ph" style="left:0;width:111.0px">最小值</div><div class="sfx" style="width:23px">$</div></div>
<div class="inp" style="left:1795.5px;top:1309.5px;width:134.0px;height:45.0px"><div class="ph" style="left:0;width:111.0px">最大值</div><div class="sfx" style="width:23px">$</div></div>
<div class="t" style="left:1775px;top:1323px;font:bold 15px/20px 'Liberation Sans',sans-serif;color:#A0A3A8">~</div>
<div class="b" style="left:1950px;top:1010px;width:20px;height:230px;box-shadow:-4px 0 14px rgba(0,0,0,0.1)"></div>
</body></html>
